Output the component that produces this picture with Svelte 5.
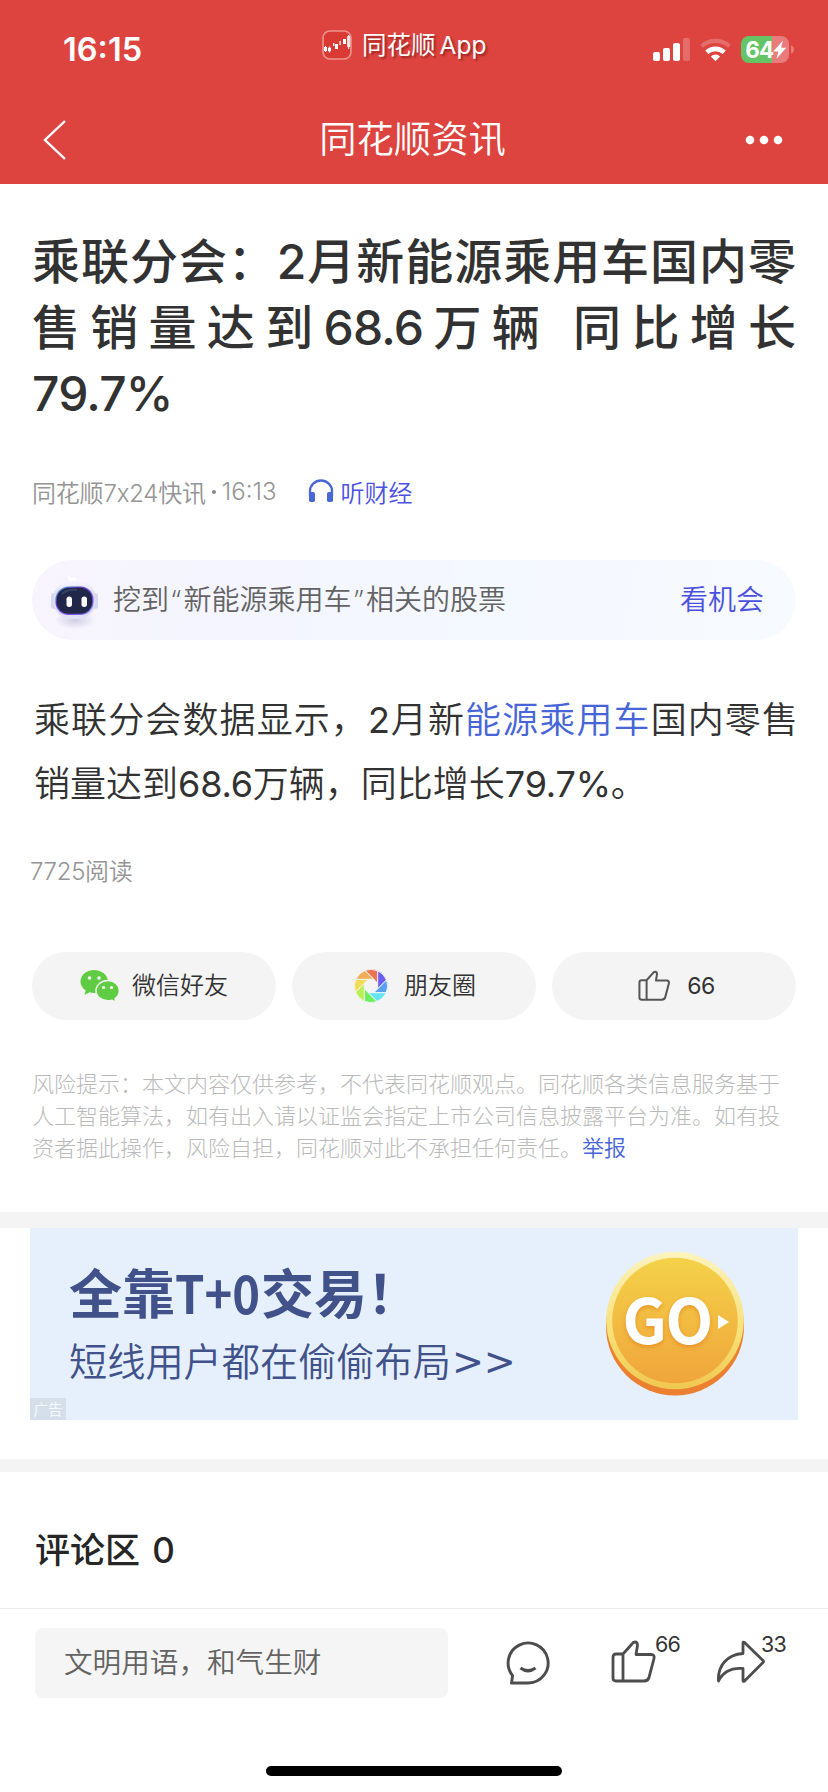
<script>
  const risk = [
    '风险提示：本文内容仅供参考，不代表同花顺观点。同花顺各类信息服务基于',
    '人工智能算法，如有出入请以证监会指定上市公司信息披露平台为准。如有投',
    '资者据此操作，风险自担，同花顺对此不承担任何责任。'
  ];
  const petals = ['#ee7352', '#6a5df0', '#5b9ff0', '#63e4f0', '#6cf061', '#b9f155', '#f1dc55', '#f0ae55'];
</script>

<div class="page">
  <header>
    <div class="status">
      <span class="time">16:15</span>
      <div class="app">
        <svg width="30" height="30" viewBox="0 0 30 30">
          <rect x="1" y="1" width="28" height="28" rx="7" fill="#d93a33" stroke="#ee9590" stroke-width="1.6" />
          <g fill="#fff">
            <rect x="2" y="17" width="3" height="4" /><rect x="3" y="16" width="1" height="6" />
            <rect x="13" y="14" width="3" height="5" /><rect x="11" y="13" width="1.4" height="3" />
            <rect x="17.4" y="11" width="1.3" height="4" /><rect x="21" y="9" width="3" height="5" />
          </g>
          <path d="M6.5 18h2v3h-2zM7.500 16.500v6M25.700 6.500h2v10h-2zM26.700 5v14" fill="none" stroke="#fff" stroke-width="1" />
        </svg>
        <span>同花顺<i>App</i></span>
      </div>
      <svg class="sys" width="144" height="32" viewBox="0 0 144 32">
        <g fill="#fff">
          <rect x="3" y="18" width="7" height="9" rx="2" />
          <rect x="13" y="14" width="7" height="13" rx="2" />
          <rect x="23" y="9" width="7" height="18" rx="2" />
          <rect x="33" y="4" width="7" height="23" rx="2" opacity=".22" />
        </g>
        <g fill="none" stroke="#fff">
          <path d="M51.500 12.200A21 21 0 0 1 79.500 12.200" stroke-width="4.200" opacity=".22" />
          <path d="M56.800 18.200A13 13 0 0 1 74.200 18.200" stroke-width="4.600" />
        </g>
        <path d="M65.500 27.200l-4.600-4.800a6.600 6.600 0 0 1 9.200 0z" fill="#fff" />
        <path d="M99 2h23v27H99a8 8 0 0 1-8-8V10a8 8 0 0 1 8-8z" fill="#65c466" />
        <path d="M122 2h9a8 8 0 0 1 8 8v11a8 8 0 0 1-8 8h-9z" fill="#e87c7a" />
        <path d="M141 11.500c4 1 4 7 0 8z" fill="#e87c7a" />
        <text x="95.300" y="23.600" class="bat">64</text>
        <path d="M133 6.500l-9.800 11h5.200l-2 7.500 9.800-11.200h-5.200z" fill="#fff" />
      </svg>
    </div>
    <div class="nav">
      <svg width="30" height="44" viewBox="0 0 30 44"><path d="M25 3L5 22l20 19" fill="none" stroke="#fff" stroke-width="2.400" /></svg>
      <h2>同花顺资讯</h2>
      <svg width="40" height="12" viewBox="0 0 40 12" fill="#fff"><circle cx="6" cy="6" r="4.300" /><circle cx="20" cy="6" r="4.300" /><circle cx="34" cy="6" r="4.300" /></svg>
    </div>
  </header>

  <article>
    <h1>乘联分会：2月新能源乘用车国内零售销量达到<span>68.6</span>万辆 同比增长<span>79.7%</span></h1>
    <div class="meta">
      <span>同花顺7x24快讯</span><b></b><span class="clock">16:13</span>
      <svg width="26" height="24" viewBox="0 0 26 24">
        <path d="M2 17v-5a11 10.500 0 0 1 22 0v5" fill="none" stroke="#4a67d6" stroke-width="2.300" />
        <rect x="1" y="13" width="6" height="10" rx="1.800" fill="#4a67d6" /><rect x="19" y="13" width="6" height="10" rx="1.800" fill="#4a67d6" />
      </svg>
      <span class="listen">听财经</span>
    </div>
    <div class="tip">
      <svg width="52" height="60" viewBox="0 0 52 60">
        <defs>
          <linearGradient id="face" x1="0" y1="0" x2="1" y2="1"><stop offset="0" stop-color="#5fc3e8" /><stop offset=".3" stop-color="#5b3fc0" /><stop offset=".7" stop-color="#8453e8" /><stop offset="1" stop-color="#6d8af5" /></linearGradient>
          <linearGradient id="shell" x1="0" y1="0" x2="0" y2="1"><stop offset="0" stop-color="#f7f6fe" /><stop offset=".4" stop-color="#d9d9f3" /><stop offset="1" stop-color="#e2e2f5" /></linearGradient>
          <radialGradient id="shade"><stop offset="0" stop-color="#cfcde4" /><stop offset="1" stop-color="#cfcde4" stop-opacity="0" /></radialGradient>
        </defs>
        <ellipse cx="27" cy="50" rx="20" ry="9" fill="url(#shade)" />
        <path d="M19 5l5 3 4 0-1 5h-4z" fill="#fff" />
        <rect x="3" y="23" width="6" height="16" rx="3" fill="#d5d8f2" /><rect x="44" y="23" width="6" height="16" rx="3" fill="#d5d8f2" />
        <rect x="5" y="11" width="43" height="38" rx="18" fill="url(#shell)" />
        <rect x="7.500" y="16.500" width="38" height="28.500" rx="13" fill="url(#face)" />
        <rect x="8.700" y="17.700" width="35.600" height="26.100" rx="12" fill="#202748" />
        <path d="M14 24q5-5 15-4" stroke="#4a5275" stroke-width="2" fill="none" opacity=".6" />
        <rect x="18.500" y="26.500" width="5.500" height="10.500" rx="2.700" fill="#fff" /><rect x="33.500" y="26.500" width="5.500" height="10.500" rx="2.700" fill="#fff" />
      </svg>
      <span class="msg">挖到<q>“</q>新能源乘用车<q>”</q>相关的股票</span>
      <span class="look">看机会</span>
    </div>
    <p class="body">乘联分会数据显示，<span>2</span>月新<a>能源乘用车</a>国内零售销量达到<span>68.6</span>万辆，同比增长<span>79.7%</span>。</p>
    <div class="reads">7725阅读</div>
    <div class="share">
      <div class="pill">
        <svg width="40" height="34" viewBox="0 0 40 34">
          <path d="M14 1C6.500 1 .5 6 .5 12.500c0 3.700 2 6.900 5.200 9L4.500 26l5-2.700c1.500.4 3 .6 4.500.6 7.500 0 14-5 14-11.400S21.500 1 14 1z" fill="#60cc43" />
          <path d="M28 11.500c-6.600 0-12 4.500-12 10.200 0 5.600 5.400 10.100 12 10.100 1.500 0 2.800-.2 4.100-.6l4 2-1-3.700c2.700-1.900 4.300-4.700 4.300-7.800 0-5.700-5-10.200-11.400-10.200z" fill="#60cc43" stroke="#f4f4f4" stroke-width="1.500" />
          <g fill="#fff"><circle cx="9.500" cy="9" r="1.800" /><circle cx="19" cy="9" r="1.800" /><circle cx="23.500" cy="18.500" r="1.600" /><circle cx="31.500" cy="18.500" r="1.600" /></g>
        </svg>
        <span>微信好友</span>
      </div>
      <div class="pill circle">
        <svg width="34" height="34" viewBox="-17 -17 34 34">
          {#each petals as color, i}
            <path d="M2.800 6.700L15.200 6.700A16.600 16.600 0 0 0 15.500 -6L2.800 6.700z" transform="rotate({(i - 2) * 45})" fill={color} stroke="#f4f4f4" stroke-width=".9" />
          {/each}
        </svg>
        <span>朋友圈</span>
      </div>
      <div class="pill like">
        <svg width="33" height="32" viewBox="0 0 46 44" fill="none" stroke="#555" stroke-width="2.800" stroke-linejoin="round">
          <path d="M12 14h-7q-3 0-3 3v21q0 3 3 3h28q4 0 5-3.500l5-19q1-4-3-4H25l1.500-9Q26.500 2 24 2q-2 0-3.500 2.500z M12 14v27" />
        </svg>
        <span>66</span>
      </div>
    </div>
    <div class="risk">
      {#each risk as line, i}
        <div>{line}{#if i === 2}<a>举报</a>{/if}</div>
      {/each}
    </div>
  </article>

  <div class="gap"></div>
  <section class="ad">
    <div class="copy">
      <strong>全靠<em>T+0</em>交易！</strong>
      <span>短线用户都在偷偷布局<b>&gt;&gt;</b></span>
    </div>
    <svg width="142" height="148" viewBox="0 0 142 148">
      <defs>
        <linearGradient id="rim" x1="0" y1="0" x2="0" y2="1"><stop offset="0" stop-color="#fcf3bf" /><stop offset=".6" stop-color="#f7e076" /><stop offset="1" stop-color="#f0c850" /></linearGradient>
        <linearGradient id="gold" x1="0" y1="0" x2="0" y2="1"><stop offset="0" stop-color="#f4d249" /><stop offset="1" stop-color="#f0a53b" /></linearGradient>
      </defs>
      <circle cx="71" cy="76.500" r="69" fill="#eb8030" />
      <circle cx="71" cy="70.500" r="68.800" fill="url(#rim)" />
      <circle cx="71" cy="70.500" r="62.800" fill="url(#gold)" />
      <text x="18.500" y="94" class="go">GO</text>
      <path d="M114 65l11 7-11 7z" fill="#fff" />
    </svg>
    <small>广告</small>
  </section>
  <div class="gap second"></div>
  <section class="comments">评论区 <span>0</span></section>

  <footer>
    <div class="input">文明用语，和气生财</div>
    <svg class="talk" width="46" height="46" viewBox="0 0 46 46" fill="none" stroke="#4d4d4d" stroke-width="2.900" stroke-linejoin="round">
      <path d="M6.500 43H23.500A20 20 0 1 0 7.600 35.600z" /><path d="M15.500 28q7.500 5.500 15 0" stroke-width="3.200" />
    </svg>
    <div class="act">
      <svg width="46" height="44" viewBox="0 0 46 44" fill="none" stroke="#4d4d4d" stroke-width="2.800" stroke-linejoin="round">
        <path d="M12 14h-7q-3 0-3 3v21q0 3 3 3h28q4 0 5-3.500l5-19q1-4-3-4H25l1.500-9Q26.500 2 24 2q-2 0-3.500 2.500z M12 14v27" />
      </svg>
      <sup>66</sup>
    </div>
    <div class="act">
      <svg width="50" height="44" viewBox="0 0 50 44" fill="none" stroke="#4d4d4d" stroke-width="2.800" stroke-linejoin="round">
        <path d="M27 13.500V3q0-1.500 1.500-.5L47 20.500q1 1 0 2L28.500 41q-1.500 1-1.500-.5V28.500C15 27.500 7 32 2.500 41 1.500 26 11 14.500 27 13.500z" />
      </svg>
      <sup class="tight">33</sup>
    </div>
  </footer>
  <div class="home"></div>
</div>

<style>
  :global(body) { background: #fff; }
  .page { width: 828px; height: 1792px; display: flex; flex-direction: column; overflow: hidden; background: #fff; color: #323232; font-family: Inter, "Noto Sans CJK SC", sans-serif; }
  .page * { box-sizing: border-box; }
  svg { flex: none; display: block; }
  header { height: 184px; flex: none; background: #dd443f; color: #fff; }
  .status { height: 96px; display: grid; grid-template-columns: 322px 328px 1fr; }
  .time { padding: 31px 0 0 63px; font-size: 32.500px; line-height: 38px; font-weight: 600; }
  .app { display: flex; gap: 10px; padding-top: 30px; font-size: 24.500px; line-height: 30px; }
  .app span { text-shadow: 2px 2px 2px rgba(80, 0, 0, .45); white-space: nowrap; }
  .app i { font-style: normal; margin-left: 4px; }
  .sys { margin-top: 34px; }
  .bat { font: 700 22.500px Inter, sans-serif; fill: #fff; letter-spacing: -1px; }
  .nav { height: 88px; display: flex; align-items: center; justify-content: space-between; padding: 0 44px 0 40px; }
  .nav h2 { margin: 0 0 0 11px; font-size: 37.300px; font-weight: 350; line-height: 50px; }
  article { height: 1028px; flex: none; padding: 45px 32px 0; }
  h1 { margin: 0; font-size: 48px; line-height: 66px; font-weight: 500; text-align: justify; }
  h1 span { letter-spacing: -.8px; }
  .meta { margin-top: 46px; height: 36px; display: flex; align-items: center; font-size: 24px; font-weight: 350; color: #949494; white-space: nowrap; }
  .meta span { letter-spacing: -.2px; }
  .meta b { width: 4px; height: 4px; border-radius: 2px; background: #888; margin: 2px 6px 0; }
  .meta svg { margin: 0 6px 0 32px; }
  .meta .clock { margin-top: 1px; letter-spacing: 0; }
  .meta .listen { color: #4b51e0; letter-spacing: 0; }
  .tip { margin-top: 51px; height: 80px; border-radius: 40px; display: flex; align-items: center; padding: 0 32px 0 16px; font-size: 28px; line-height: 40px; color: #636363; font-weight: 350; background: linear-gradient(100deg, #f8f4fd, #f4f5fe 25%, #f4f8ff 60%, #f7fbff); }
  .msg { flex: 1; margin: 0 0 0 13px; }
  q { quotes: none; display: inline-block; width: 14.500px; text-align: center; font-family: "Noto Sans", sans-serif; line-height: 20px; }
  q::before, q::after { content: none; }
  .look { color: #4b51dc; }
  .body { margin: 48px -2px 0 2px; font-size: 36px; line-height: 64px; font-weight: 350; text-align: justify; }
  .body span { font-weight: 400; letter-spacing: -.2px; }
  a { color: #4765d8; }
  .reads { margin: 39px 0 0 -2px; font-size: 24px; line-height: 34px; color: #949494; font-weight: 350; letter-spacing: -.3px; }
  .share { margin-top: 63px; display: grid; grid-template-columns: repeat(3, 1fr); gap: 16px; }
  .pill { height: 68px; border-radius: 34px; background: #f4f4f4; display: flex; align-items: center; justify-content: center; gap: 12px; font-size: 24px; font-weight: 350; }
  .pill span { margin-top: -5px; }
  .pill.circle { gap: 16px; padding-left: 2px; }
  .pill.like { gap: 16px; padding-left: 5px; }
  .like span { font-size: 23px; font-weight: 400; margin-top: -1px; letter-spacing: -.6px; }
  .risk { margin-top: 48px; font-size: 22px; line-height: 32px; color: #bababa; font-weight: 300; white-space: nowrap; }
  .risk a { font-weight: 350; }
  .gap { height: 16px; flex: none; background: #f4f4f4; }
  .ad { position: relative; height: 192px; flex: none; margin: 0 30px; display: flex; justify-content: space-between; background: #e6f0fd; color: #41518a; padding: 22px 52px 0 39px; font-family: "Noto Sans CJK SC", sans-serif; }
  .copy { display: flex; flex-direction: column; white-space: nowrap; }
  .copy strong { display: flex; font-size: 53px; line-height: 80px; font-weight: 700; margin-top: 1px; }
  .copy em { font-style: normal; width: 86px; transform: scaleX(.89); transform-origin: left; }
  .copy span { display: flex; font-size: 38.200px; line-height: 56px; font-weight: 350; margin-top: 1px; }
  .copy b { font-family: "DejaVu Sans", sans-serif; font-weight: 400; margin: 2px 0 0 1px; }
  .go { font: 700 62px "Noto Sans CJK SC", sans-serif; fill: #fff; letter-spacing: -1.500px; filter: drop-shadow(0 2px 2px rgba(225, 120, 20, .6)); }
  .ad small { position: absolute; left: 0; bottom: 0; width: 36px; height: 22px; font-size: 14.500px; line-height: 21px; text-align: center; color: #f5f9fd; background: #d4dfea; }
  .second { height: 13px; margin-top: 39px; }
  .comments { height: 136px; flex: none; padding: 53px 0 0 35px; font-size: 35px; line-height: 50px; font-weight: 500; color: #262626; white-space: pre; }
  .comments span { margin-left: 3px; }
  footer { height: 110px; flex: none; border-top: 1px solid #ececec; display: flex; align-items: flex-start; padding: 19px 0 0 35px; }
  .input { width: 413px; height: 70px; border-radius: 8px; background: #f5f5f5; color: #636363; font-size: 28.600px; font-weight: 350; line-height: 70px; padding-left: 29px; }
  .talk { margin: 12px 0 0 57px; }
  .act { display: flex; width: 105px; margin-top: 12px; }
  .talk + .act { margin-left: 60px; }
  sup { font-size: 21.500px; line-height: 26px; color: #333; margin: -9px 0 0 -2px; letter-spacing: -.9px; }
  .tight { margin-left: -5px; }
  .home { width: 296px; height: 10px; border-radius: 5px; background: #000; margin: 48px auto 0; flex: none; }
</style>
